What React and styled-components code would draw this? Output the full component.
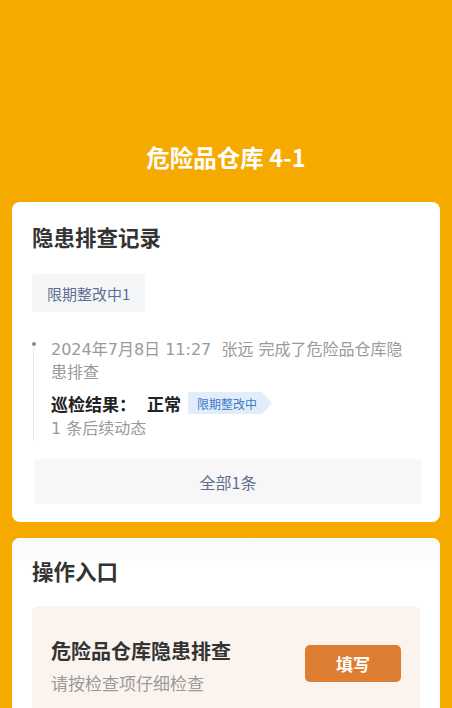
import React from "react";
import styled, { createGlobalStyle } from "styled-components";

const Global = createGlobalStyle`
  html, body { margin: 0; padding: 0; background: #F6AA00; }
  body { font-family: "Noto Sans CJK SC", "Noto Sans", sans-serif; -webkit-font-smoothing: antialiased; }
  * { box-sizing: border-box; }
`;

const Page = styled.div`
  min-height: 708px;
  background: #F6AA00;
  padding: 0 12px 20px;
`;

const Header = styled.header`
  height: 202px;
  display: flex;
  align-items: flex-end;
  justify-content: center;
  padding-bottom: 29px;
`;

const PageTitle = styled.h1`
  margin: 0;
  color: #fff;
  font-size: 23.5px;
  line-height: 32px;
  font-weight: 700;
`;

const Card = styled.section`
  background: #fff;
  border-radius: 8px;
  padding: ${(p) => p.$pad};
  margin-bottom: 16px;
  overflow: hidden;
`;

const CardTitle = styled.h2`
  margin: 0;
  font-size: 21.5px;
  line-height: 30px;
  font-weight: 700;
  color: #333;
`;

const FilterTag = styled.div`
  display: inline-flex;
  align-items: center;
  height: 38px;
  padding: 0 15px;
  margin-top: 22px;
  background: #F5F6F8;
  border-radius: 3px;
  color: #5E6E8F;
  font-size: 15px;
`;

const Timeline = styled.div`
  position: relative;
  margin-top: 26px;
  padding: 0 12px 0 19px;
  &::before {
    content: "";
    position: absolute;
    left: 1px;
    top: 7px;
    bottom: -1px;
    width: 1px;
    background: #e9e9e9;
  }
  &::after {
    content: "";
    position: absolute;
    left: -0.5px;
    top: 4px;
    width: 4px;
    height: 4px;
    border-radius: 50%;
    background: #8c8c8c;
  }
`;

const Desc = styled.p`
  margin: 0;
  color: #9a9a9a;
  font-family: "DejaVu Sans", "Noto Sans CJK SC", sans-serif;
  font-size: 16px;
  line-height: 23px;
  white-space: pre-wrap;
`;

const ResultRow = styled.div`
  display: flex;
  align-items: center;
  height: 26px;
  margin: 6px 0 1px;
  font-size: 17px;
  font-weight: 700;
  color: #222;
`;

const ResultValue = styled.span`
  margin-left: 11px;
  margin-right: 7px;
`;

const StatusTag = styled.span`
  display: inline-flex;
  align-items: center;
  height: 22px;
  padding: 0 15px 0 9px;
  background: #E2EDFA;
  color: #3B78C8;
  font-size: 12px;
  font-weight: 400;
  clip-path: polygon(0 0, calc(100% - 10px) 0, 100% 50%, calc(100% - 10px) 100%, 0 100%);
`;

const MoreButton = styled.button`
  display: block;
  width: calc(100% - 3px);
  height: 45px;
  margin: 19px 0 0 2px;
  border: none;
  border-radius: 4px;
  background: #F7F7F8;
  color: #5E6E8F;
  font-family: inherit;
  font-size: 16px;
`;

const ActionHeader = styled.div`
  margin: -18px -20px 0;
  padding: 18px 20px 20px;
  background: linear-gradient(#f9f9f9, #fff 28px);
`;

const ActionBox = styled.div`
  display: flex;
  align-items: center;
  justify-content: space-between;
  background: #FBF3EE;
  border-radius: 6px;
  padding: 31px 19px 31px 19px;
`;

const ActionInfo = styled.div`
  display: flex;
  flex-direction: column;
`;

const ActionName = styled.div`
  font-size: 20px;
  line-height: 28px;
  font-weight: 700;
  color: #333;
`;

const ActionHint = styled.div`
  margin-top: 6px;
  font-size: 17px;
  line-height: 24px;
  color: #9a9a9a;
`;

const FillButton = styled.button`
  width: 96px;
  height: 37px;
  margin-bottom: 6px;
  border: none;
  border-radius: 5px;
  background: #DD7D31;
  color: #fff;
  font-family: inherit;
  font-size: 17px;
  font-weight: 700;
`;

export default function App() {
  return (
    <>
      <Global />
      <Page>
        <Header>
          <PageTitle>危险品仓库 4-1</PageTitle>
        </Header>
        <Card $pad="20px 17px 18px 20px">
          <CardTitle>隐患排查记录</CardTitle>
          <FilterTag>限期整改中1</FilterTag>
          <Timeline>
            <Desc>{"2024年7月8日 11:27  张远 完成了危险品仓库隐患排查"}</Desc>
            <ResultRow>
              巡检结果：<ResultValue>正常</ResultValue>
              <StatusTag>限期整改中</StatusTag>
            </ResultRow>
            <Desc>1 条后续动态</Desc>
          </Timeline>
          <MoreButton>全部1条</MoreButton>
        </Card>
        <Card $pad="18px 20px 20px 20px">
          <ActionHeader>
            <CardTitle>操作入口</CardTitle>
          </ActionHeader>
          <ActionBox>
            <ActionInfo>
              <ActionName>危险品仓库隐患排查</ActionName>
              <ActionHint>请按检查项仔细检查</ActionHint>
            </ActionInfo>
            <FillButton>填写</FillButton>
          </ActionBox>
        </Card>
      </Page>
    </>
  );
}
